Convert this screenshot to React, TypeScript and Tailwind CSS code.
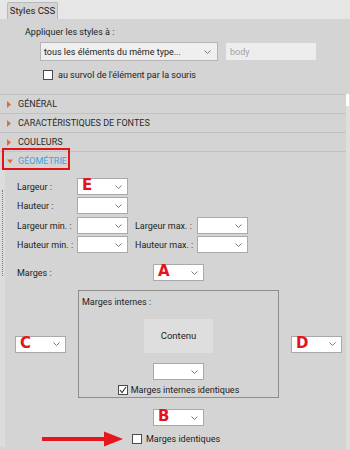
import React from "react";

function Chevron() {
  return (
    <svg width="7" height="4" viewBox="0 0 7 4" className="shrink-0">
      <path d="M0.5 0.5 L3.5 3.5 L6.5 0.5" fill="none" stroke="#7a7a7a" strokeWidth="1" />
    </svg>
  );
}

function Combo({ letter }: { letter?: string }) {
  return (
    <div className="relative flex h-[17px] w-[51px] shrink-0 items-center justify-end border border-[#a9a9a9] bg-white pr-[5px]">
      {letter && (
        <span className="absolute left-[4px] top-[-2px] font-['DejaVu_Sans',sans-serif] text-[15px] font-bold leading-[17px] text-[#e3141b]">
          {letter}
        </span>
      )}
      <Chevron />
    </div>
  );
}

function Check({ checked }: { checked?: boolean }) {
  return (
    <div className="flex h-[10px] w-[10px] shrink-0 items-center justify-center border border-[#4a4a4a] bg-white">
      {checked && (
        <svg width="8" height="8" viewBox="0 0 8 8">
          <path d="M1 4 L3 6.5 L7 1" fill="none" stroke="#333" strokeWidth="1.1" />
        </svg>
      )}
    </div>
  );
}

function Section({ label, open }: { label: string; open?: boolean }) {
  return (
    <div className="flex h-[19px] items-center border-t border-[#c2c2c2] pl-[7px]">
      {open ? (
        <svg width="6" height="5" viewBox="0 0 6 5" className="mr-[5px]">
          <path d="M0 0.5 L6 0.5 L3 4.5 Z" fill="#d9703a" />
        </svg>
      ) : (
        <svg width="4" height="7" viewBox="0 0 4 7" className="mr-[7px]">
          <path d="M0 0 L4 3.5 L0 7 Z" fill="#d9703a" />
        </svg>
      )}
      <span className={open ? "text-[#3fa2da]" : "text-[#2b2b2b]"}>{label}</span>
    </div>
  );
}

export default function App() {
  return (
    <div className="flex h-[449px] w-[350px] flex-col overflow-hidden bg-[#d4d4d4] font-['Roboto',sans-serif] text-[9px] leading-[12px] text-[#222]">
      {/* tab strip */}
      <div className="flex h-[19px] shrink-0 items-end bg-[#e6e6e6] pl-[7px]">
        <div className="flex h-[17px] w-[51px] items-center justify-center rounded-t-[2px] border border-b-0 border-[#b9b9b9] bg-[#d4d4d4] text-[9.5px]">
          Styles CSS
        </div>
      </div>

      {/* apply to */}
      <div className="shrink-0 pb-[13px] pt-[7px]">
        <div className="pl-[25px]">Appliquer les styles à :</div>
        <div className="mt-[4px] flex items-center pl-[40px]">
          <div className="flex h-[19px] w-[178px] items-center justify-between border border-[#b4b4b4] bg-[#efefef] pl-[3px] pr-[6px]">
            <span>tous les éléments du même type...</span>
            <Chevron />
          </div>
          <div className="ml-[8px] flex h-[17px] w-[90px] items-center bg-[#ededed] pl-[4px] text-[#a0a0a0]">body</div>
        </div>
        <div className="mt-[8px] flex items-center pl-[43px]">
          <Check />
          <span className="ml-[5px]">au survol de l'élément par la souris</span>
        </div>
      </div>

      {/* scroll area */}
      <div className="flex flex-1">
        <div className="flex-1">
          <Section label="GÉNÉRAL" />
          <Section label="CARACTÉRISTIQUES DE FONTES" />
          <Section label="COULEURS" />
          <div className="relative">
            <Section label="GÉOMÉTRIE" open />
            <div className="absolute left-[2px] top-[-3px] h-[22px] w-[68px] border-2 border-[#e01515]" />
          </div>

          <div className="flex">
            <div className="flex w-[5px] shrink-0 justify-center bg-[#dcdcdc]">
              <div className="mt-[20px] h-[86px] border-l border-dotted border-[#777]" />
            </div>
            <div className="flex-1 pl-[12px] pt-[8px]">
              <div className="flex h-[17px] items-center">
                <span className="w-[60px]">Largeur :</span>
                <Combo letter="E" />
              </div>
              <div className="mt-[2px] flex h-[17px] items-center">
                <span className="w-[60px]">Hauteur :</span>
                <Combo />
              </div>
              <div className="mt-[3px] flex h-[17px] items-center">
                <span className="w-[60px]">Largeur min. :</span>
                <Combo />
                <span className="ml-[7px] w-[62px]">Largeur max. :</span>
                <Combo />
              </div>
              <div className="mt-[2px] flex h-[17px] items-center">
                <span className="w-[60px]">Hauteur min. :</span>
                <Combo />
                <span className="ml-[7px] w-[62px]">Hauteur max. :</span>
                <Combo />
              </div>

              <div className="mt-[11px] flex h-[17px] items-center">
                <span className="w-[136px]">Marges :</span>
                <Combo letter="A" />
              </div>

              <div className="-ml-[2px] mt-[9px] flex items-center">
                <Combo letter="C" />
                <div className="ml-[12px] flex h-[108px] w-[201px] flex-col items-center border border-[#8e8e8e] pt-[5px]">
                  <div className="self-start pl-[3px]">Marges internes :</div>
                  <div className="mt-[11px] flex h-[34px] w-[69px] items-center justify-center bg-[#dedede] text-[9.5px]">Contenu</div>
                  <div className="mt-[10px]">
                    <Combo />
                  </div>
                  <div className="mt-[4px] flex items-center">
                    <Check checked />
                    <span className="ml-[3px]">Marges internes identiques</span>
                  </div>
                </div>
                <div className="ml-[12px]">
                  <Combo letter="D" />
                </div>
              </div>

              <div className="ml-[136px] mt-[11px]">
                <Combo letter="B" />
              </div>
              <div className="mt-[5px] flex items-center">
                <svg width="82" height="16" viewBox="0 0 82 16" className="ml-[25px] mr-[8px]">
                  <path d="M0 6 L62 6 L62 0.5 L81 8 L62 15.5 L62 10 L0 10 Z" fill="#e5171d" />
                </svg>
                <Check />
                <span className="ml-[4px]">Marges identiques</span>
              </div>
            </div>
          </div>
        </div>
        <div className="w-[4px] shrink-0 bg-[#dedede]">
          <div className="h-[12px] w-[3px] bg-white" />
        </div>
      </div>
    </div>
  );
}
